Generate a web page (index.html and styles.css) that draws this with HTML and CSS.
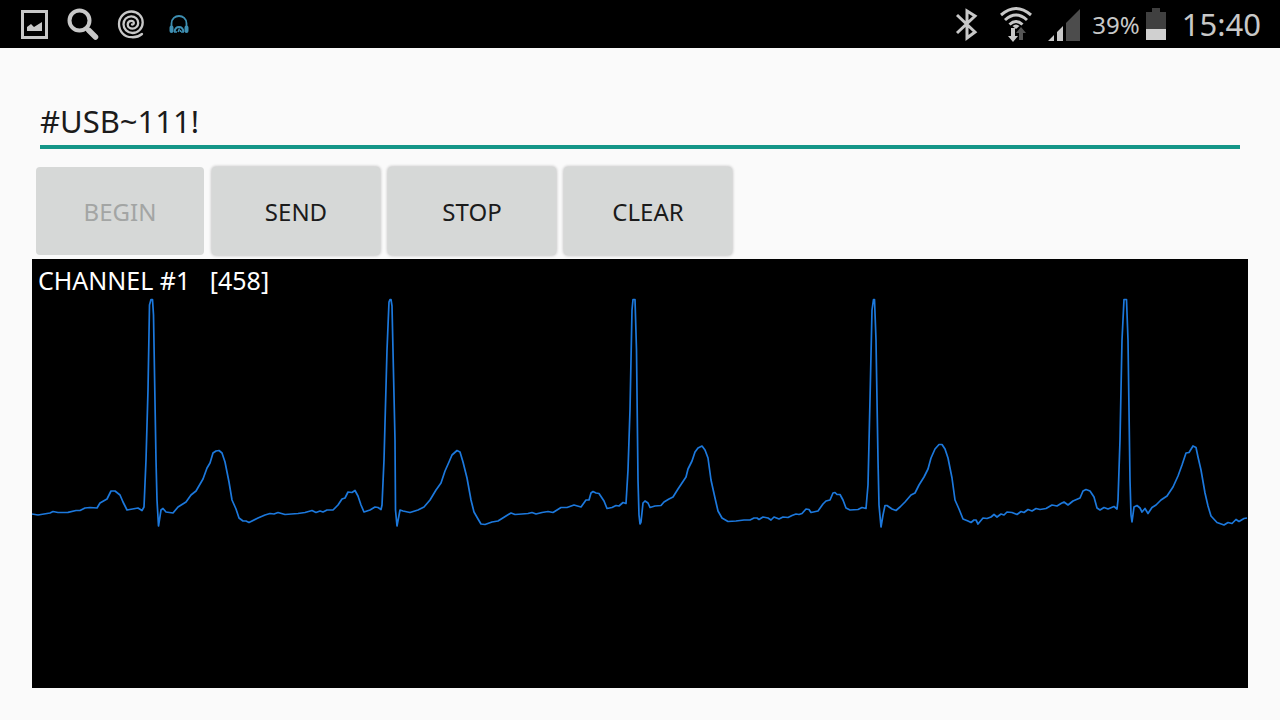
FILE: index.html
```html
<!DOCTYPE html>
<html lang="en">
<head>
    <meta charset="UTF-8" />
    <meta name="viewport" content="width=device-width, initial-scale=1" />
    <title>USB Monitor</title>
    <link rel="stylesheet" href="styles.css">
</head>
<body>
<header class="status-bar">
    <div class="status-group">
        <!-- picture -->
        <svg width="32" height="32" viewBox="0 0 32 32" fill="#c8c8c8">
            <path fill-rule="evenodd" d="M2 2H29V31H2ZM5 5V28H26V5Z" />
            <path d="M8 23V19L12 16L15 19L23 14V23Z" />
        </svg>
        <!-- search -->
        <svg width="32" height="32" viewBox="0 0 32 32" fill="none" stroke="#c8c8c8">
            <circle cx="12.500" cy="12.500" r="10" stroke-width="4" />
            <path d="M19 20L22 23" stroke-width="4" />
            <path d="M22 22.500L28.500 29" stroke-width="5.500" stroke-linecap="round" />
        </svg>
        <!-- spiral -->
        <svg width="32" height="32" viewBox="0 0 32 32" fill="none" stroke="#c8c8c8" stroke-width="2.300" stroke-linecap="round">
            <path d="M27 26C24 28.500 20.500 29.500 16.500 29.200C9 29 4 23 4 16C4 9 9.500 3.500 16.500 3.500C23 3.500 27.700 8.500 27.700 14.500C27.700 20.500 23 25 17.500 25C12.500 25 8.500 21 8.500 16.200C8.500 11.500 12 8.300 16.200 8.300C20.300 8.300 23.200 11.300 23.200 15C23.200 18.200 20.500 20.700 17.500 20.700C14.800 20.700 12.700 18.800 12.700 16.500C12.700 14.300 14.300 12.800 16.200 12.800C18 12.800 19 14 18.800 15.300C18.600 16.300 17.700 16.800 17 16.500" />
        </svg>
        <!-- headphones -->
        <svg width="32" height="32" viewBox="0 0 32 32" fill="none" stroke="#3e8fb2">
            <path d="M8.500 19V15.500C8.500 5.500 23.500 5.500 23.500 15.500V19" stroke-width="1.800" />
            <path d="M8.500 19.500V23M23.500 19.500V23" stroke-width="4" stroke-linecap="round" />
            <path d="M11.500 24C12 20 14 19 16 19S20 20 20.500 24" stroke-width="2" />
            <path d="M11 24H14M18 24H21M15 24L16.500 20.500M17.500 22V24" stroke-width="1.500" />
        </svg>
    </div>
    <div class="status-group">
        <!-- bluetooth -->
        <svg width="32" height="36" viewBox="0 0 32 36" fill="none" stroke="#c8c8c8" stroke-width="3">
            <path d="M9 9L27 26L19 32V5L27 10L9 27" />
        </svg>
        <!-- wifi -->
        <svg width="36" height="36" viewBox="-2 0 36 36" fill="none" stroke="#c8c8c8" stroke-width="3">
            <path d="M3 9Q18 -4 33 9M7 14Q18 4 29 14M11.500 18.500Q18 12.500 24.500 18.500" />
            <path d="M14.500 20Q18 17 21.500 20L18 23Z" fill="#c8c8c8" stroke="none" />
            <path d="M13 22H17V30H20L15 36L10 30H13Z" fill="#c8c8c8" stroke="none" />
            <path d="M21 34V27H18L23 21L28 27H25V34Z" fill="#555" stroke="none" />
        </svg>
        <!-- signal -->
        <svg width="32" height="36" viewBox="0 0 32 36" fill="#c8c8c8">
            <path d="M0 35L6 29V35ZM9 26L15 20V35H9Z" />
            <path d="M18 17L32 3V35H18Z" fill="#4c4c4c" />
        </svg>
        <div class="battery">
            <span>39%</span>
            <svg width="20" height="36" viewBox="0 0 20 36">
                <path d="M6 2H14V6H20V23H0V6H6Z" fill="#404040" />
                <path d="M0 23H20V34H0Z" fill="#d0d0d0" />
            </svg>
        </div>
        <time class="clock">15:40</time>
    </div>
</header>
<main class="container">
    <input type="text" class="command" id="command" aria-label="Command" value="#USB~111!" spellcheck="false" />
    <div class="button-container">
        <button type="button" disabled>BEGIN</button>
        <button type="button">SEND</button>
        <button type="button">STOP</button>
        <button type="button">CLEAR</button>
    </div>
    <section class="scope">
        <div class="channel">CHANNEL #1   [458]</div>
        <svg class="trace" viewBox="32 295 1216 393" preserveAspectRatio="none">
            <polyline points="
                32,514 38,515 44,514 50,513 53,511.500 58,512.500 68,512.300 76,510.500 80,510.500 85,508 90,507.500 97,508 100,503 107,499 111,491 115,491 120,495 123,502 127,510 138,508 142,510.500 144,507 146,460 148,390 149.500,305 151,299.500 152.500,299.500 153.500,315 156,460 157,500 158.500,526 161,510 163,508.500 166,512 173,513 178,507 186,502 191,495 196,491 203,479 207,468 210,463 213,453 216,451 219,450.500 222,453 225,462 229,482 232,500 236,509 239,518 243,521 246,521 249,522.500 258,518 265,515 270,513.500
                274,514 278,512.500 285,514.500 298,513.500 305,512.500 312,510.500 316,512.500 320,511 323,512 327,510 333,510 338,505 342,499 345,498 348,492 352,492.500 355,490.500 358,496 361,505 364,512 370,510 375,507 378,507.500 381,509.500 382,505 384,460 387,350 389,302 390,299.500 391,299.500 392,306 395,440 395.500,510 397,526 400,510 403,511 410,512.500 418,510 424,507 430,500 436,490 441,483 445,471 449,462 452,455 457,450.500 460,452 463,462 467,478 471,500 474,512 478,519 481,524 485,524.500 492,522 498,521 506,516 511,513 515,514.500 522,514
                528,513.500 532,512.500 536,514 542,512.500 548,511.500 553,512.500 561,507.500 567,507.500 574,505 581,507 586,500 589,500 591,493 593,491.500 596,493 599,493.500 604,501 607,508.500 612,507.500 616,505.500 619,506 623,502.500 626,503.500 628,470 630,410 632,310 633,299.500 635,299.500 636.500,350 638,480 639,515 640,524 641,522 643,503 645,501 648,503 650,507.500 655,506 661,505.500 664,502 669,499 673,497 678,489 686,477 688,469 692,461 695,452 698,448 702,446 705,450 708,458 711,480 715,498 718,511 722,518 728,521.500 736,521 744,520 750,520 754,518 757,518 759,519.500 763,517
                768,518 771,520 774,517 779,519 783,517 788,517.500 792,515.500 796,514 799,514.500 802,513.500 806,509 809,509.500 811,512.500 818,511 823,504 826,501 830,500 833,493 835,492.500 837,494.500 840,494.500 843,500 846,508 850,510 858,509.500 862,507.500 866,508.500 868,485 870,400 872,310 873.500,299.500 874.500,299.500 876,340 878,460 879,505 881,527 883,515 885,505.500 887,505.500 892,509 896,510.500 900,507 905,502 911,495 915,493 919,485 924,477 928,469 931,458 935,449 939,444.500 942,444.500 945,449 948,458 952,478 955,500 959,509 963,519 968,521 971,522.500 974,520 976,520 978,524 983,518 987,518.500 991,517 994,514.500 997,517 1001,514 1004,515
                1007,512 1012,512.500 1017,514.500 1021,511.500 1024,512.500 1028,509.500 1032,511 1036,508.500 1040,509.500 1046,508.500 1052,505 1057,506 1061,503.500 1064,502 1068,505 1073,501 1080,498 1083,491 1086,489.500 1090,491 1094,497 1097,508 1100,510 1104,507.500 1108,509 1114,506.500 1117,509 1118,500 1120,440 1122,340 1124,299.500 1126.500,299.500 1128,340 1130,480 1131,515 1132,522 1134,507 1137,505.500 1140,508 1142,512 1145,508.500 1148,513.500 1152,507.500 1156,505 1161,500 1167,496 1173,487 1178,476 1182,465 1186,453 1189,452.500 1193,446 1196,447.500 1198,457 1201,470 1205,493 1208,506 1211,516 1217,522.500 1224,525 1228,522.500 1232,523.500 1236,519.500 1239,521.500 1244,518.500 1247,518
            " />
        </svg>
    </section>
</main>
</body>
</html>
```
FILE: styles.css
```css
* {
    box-sizing: border-box;
}

body {
    background-color: #fafafa;
    color: #1b1b1b;
    font-family: 'Noto Sans', sans-serif;
    font-size: 24px;
    margin: 0;
    display: flex;
    flex-direction: column;
    min-height: 100vh;
}

svg {
    display: block;
    flex: none;
}

.status-bar {
    height: 48px;
    padding: 0 19px;
    background-color: #000;
    color: #c8c8c8;
    display: flex;
    justify-content: space-between;
    align-items: center;
}

.status-group {
    display: flex;
    align-items: center;
    gap: 16px;
}

.battery {
    display: flex;
    align-items: center;
    gap: 6px;
    margin-left: -4px;
}

.clock {
    font-size: 31px;
}

.container {
    flex: 1;
    display: flex;
    flex-direction: column;
    padding: 49px 32px 32px;
}

.command {
    height: 52px;
    margin: 0 8px;
    padding: 0;
    border: none;
    border-bottom: 4px solid #149688;
    outline: none;
    background: none;
    color: inherit;
    font-family: inherit;
    font-size: 31px;
}

.button-container {
    display: flex;
    gap: 8px;
    padding: 18px 4px 4px;
}

button {
    width: 168px;
    height: 88px;
    border: none;
    border-radius: 4px;
    background-color: #d6d8d7;
    color: #1b1b1b;
    font-family: inherit;
    font-size: 24px;
    box-shadow: 0 0 3px 1px rgba(0, 0, 0, 0.2);
    cursor: pointer;
}

button:disabled {
    color: #a3a5a4;
    box-shadow: none;
    cursor: default;
}

.scope {
    flex: 1;
    display: flex;
    flex-direction: column;
    background-color: #000;
    color: #fff;
}

.channel {
    height: 36px;
    padding: 0 6px;
    font-size: 25px;
    line-height: 42px;
    white-space: pre;
}

.trace {
    flex: 1;
    width: 100%;
    min-height: 0;
}

.trace polyline {
    fill: none;
    stroke: #1c78dc;
    stroke-width: 1.7;
    stroke-linejoin: round;
}
```
